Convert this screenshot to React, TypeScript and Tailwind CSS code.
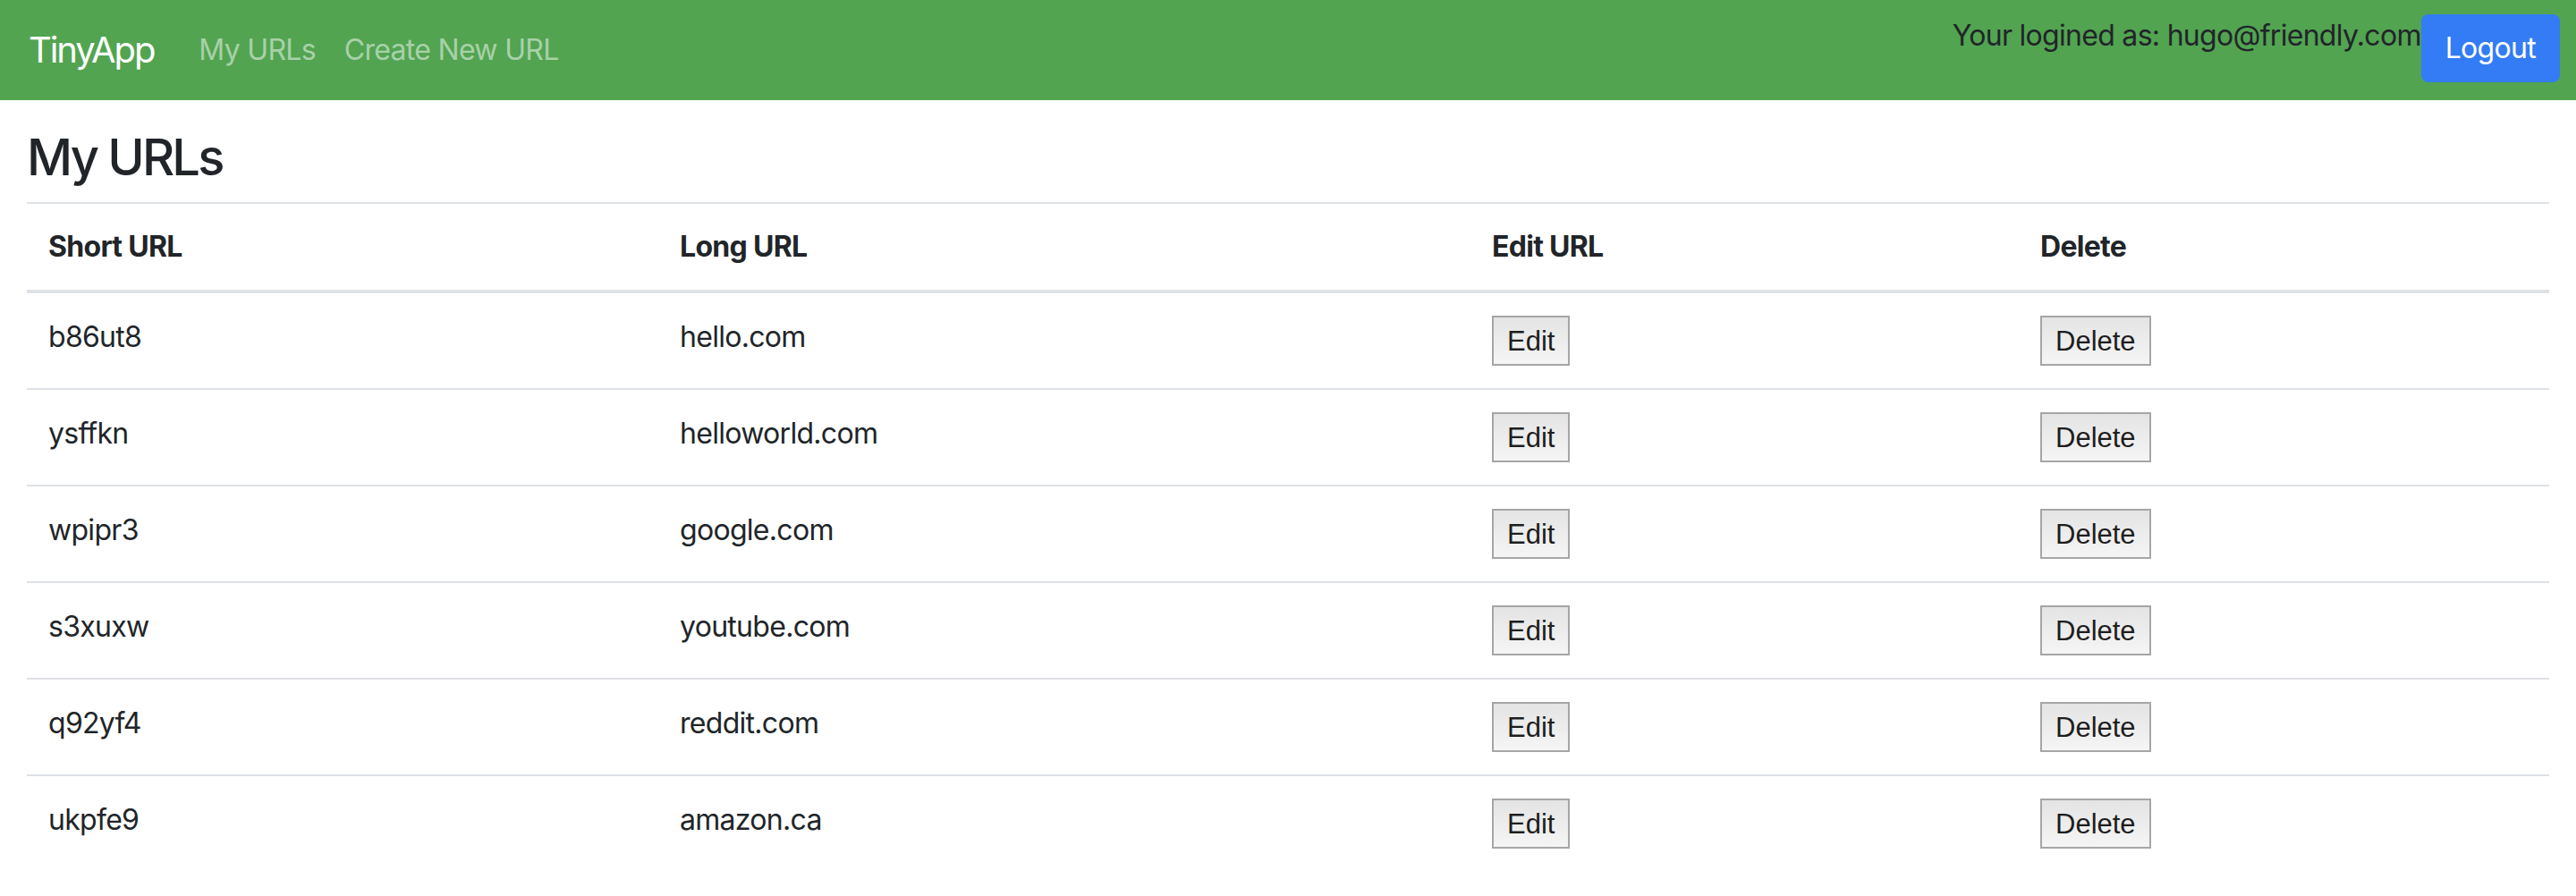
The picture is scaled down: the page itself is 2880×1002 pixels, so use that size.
import React from "react";

const urls = [
  { short: "b86ut8", long: "hello.com" },
  { short: "ysffkn", long: "helloworld.com" },
  { short: "wpipr3", long: "google.com" },
  { short: "s3xuxw", long: "youtube.com" },
  { short: "q92yf4", long: "reddit.com" },
  { short: "ukpfe9", long: "amazon.ca" },
];

function GrayButton({ children }: { children: React.ReactNode }) {
  return (
    <button className="h-[56px] px-[15px] border-2 border-[#a6a6a6] bg-linear-to-b from-[#e4e4e4] to-[#f5f5f5] text-[31px] leading-none tracking-normal text-[#1e1e1e] font-['Liberation_Sans',Arial,sans-serif]">
      {children}
    </button>
  );
}

export default function App() {
  return (
    <div className="min-h-screen bg-white font-[Inter,sans-serif] tracking-[-0.044em] text-[#212529]">
      <nav className="flex items-center h-[112px] pl-[32px] pr-[18px] bg-[#52a451]">
        <a className="mr-[34px] text-[40px] leading-[60px] tracking-[-0.052em] text-white">TinyApp</a>
        <a className="px-[16px] text-[32px] leading-[48px] text-white/50">My URLs</a>
        <a className="px-[16px] text-[32px] leading-[48px] text-white/50">Create New URL</a>
        <div className="ml-auto self-start mt-[16px] flex items-start">
          <span className="text-[32px] leading-[48px] text-[#212529]">Your logined as: hugo@friendly.com</span>
          <button className="h-[76px] px-[27px] rounded-[8px] bg-[#337cf5] text-white text-[32px] leading-[48px]">
            Logout
          </button>
        </div>
      </nav>

      <main className="px-[30px]">
        <h3 className="mt-[31px] mb-[16px] text-[56px] leading-[67px] tracking-[-0.05em] font-medium">My URLs</h3>
        <table className="w-full table-fixed border-separate border-spacing-0 text-left">
          <colgroup>
            <col className="w-[706px]" />
            <col className="w-[908px]" />
            <col className="w-[613px]" />
            <col />
          </colgroup>
          <thead>
            <tr>
              {["Short URL", "Long URL", "Edit URL", "Delete"].map((h) => (
                <th
                  key={h}
                  className="border-t-2 border-b-4 border-[#dee2e6] p-[24px] align-bottom text-[32px] leading-[48px] font-bold"
                >
                  {h}
                </th>
              ))}
            </tr>
          </thead>
          <tbody>
            {urls.map((u, i) => {
              const cell =
                "px-[24px] py-[25px] align-top text-[32px] leading-[48px] border-[#dee2e6] " +
                (i === 0 ? "" : "border-t-2");
              return (
                <tr key={u.short}>
                  <td className={cell}>{u.short}</td>
                  <td className={cell}>{u.long}</td>
                  <td className={cell}>
                    <GrayButton>Edit</GrayButton>
                  </td>
                  <td className={cell}>
                    <GrayButton>Delete</GrayButton>
                  </td>
                </tr>
              );
            })}
          </tbody>
        </table>
      </main>
    </div>
  );
}
